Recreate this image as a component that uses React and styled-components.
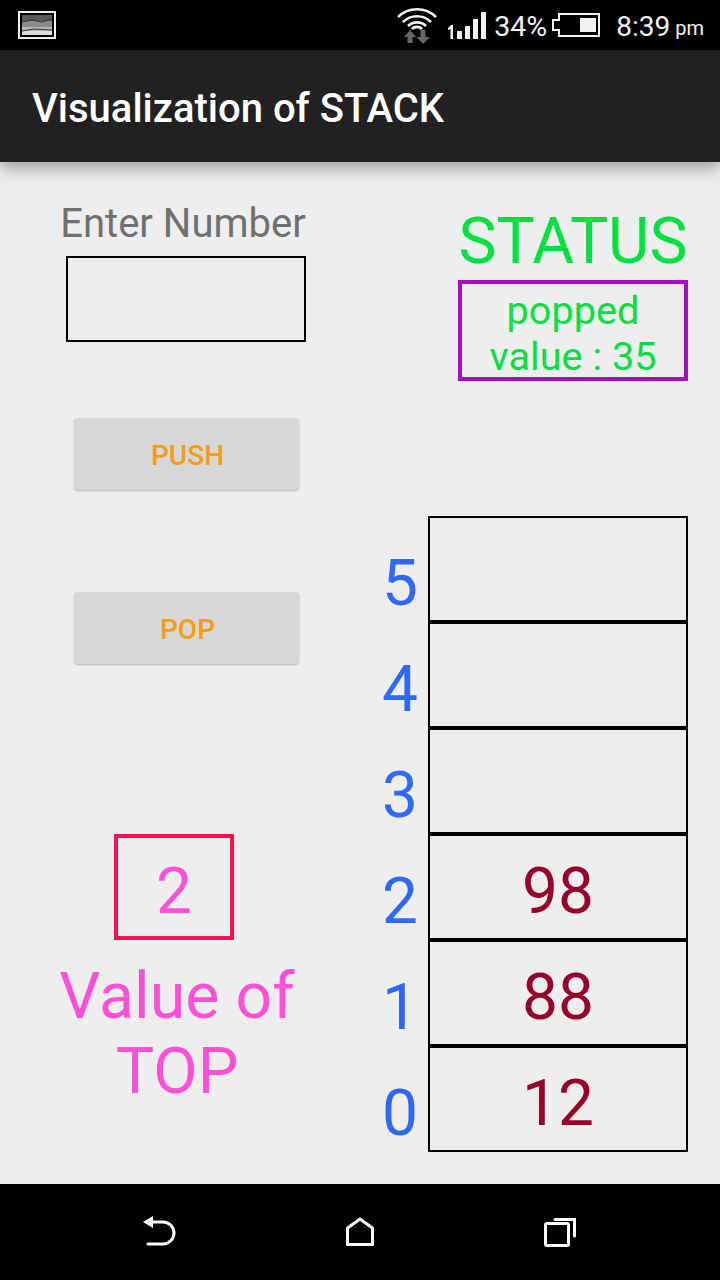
import React from "react";
import styled, { createGlobalStyle } from "styled-components";

const GlobalStyle = createGlobalStyle`
  html, body {
    margin: 0;
    padding: 0;
    background: #eeeeee;
  }
  * {
    box-sizing: border-box;
  }
`;

const Screen = styled.div`
  width: 720px;
  height: 1280px;
  display: flex;
  flex-direction: column;
  overflow: hidden;
  background: #eeeeee;
  font-family: Roboto, "Liberation Sans", sans-serif;
`;

const StatusBar = styled.div`
  height: 50px;
  flex: none;
  background: #000;
  color: #f2f2f2;
  display: flex;
  align-items: center;
  padding: 0 16px 0 18px;
`;

const StatusRight = styled.div`
  margin-left: auto;
  display: flex;
  align-items: center;
`;

const IconSlot = styled.div`
  display: flex;
  margin-left: ${(p) => p.$left || 0}px;
`;

const StatusText = styled.span`
  font-size: ${(p) => p.$size || 28}px;
  line-height: 46px;
  padding-top: 4px;
  margin-left: ${(p) => p.$left || 0}px;
`;

const Small = styled.span`
  font-size: 20px;
  line-height: 44px;
  padding-top: 6px;
  margin-left: 5px;
`;

const AppBar = styled.div`
  height: 112px;
  flex: none;
  background: #212121;
  color: #fff;
  display: flex;
  align-items: center;
  padding: 4px 0 0 32px;
  font-size: 40px;
  font-weight: 500;
  box-shadow: 0 6px 16px rgba(0, 0, 0, 0.35);
  position: relative;
  z-index: 1;
`;

const Content = styled.div`
  flex: 1;
  display: flex;
  padding-right: 32px;
`;

const LeftColumn = styled.div`
  width: 368px;
  flex: none;
  display: flex;
  flex-direction: column;
  align-items: center;
  padding-top: 39px;
`;

const EnterLabel = styled.div`
  width: 368px;
  padding-right: 2px;
  text-align: center;
  font-size: 40px;
  line-height: 45px;
  color: #707070;
`;

const NumberInput = styled.div`
  width: 240px;
  height: 86px;
  margin-top: 10px;
  margin-left: 4px;
  border: 2px solid #000;
`;

const ActionButton = styled.div`
  width: 225px;
  height: 72px;
  margin-top: ${(p) => p.$top}px;
  margin-left: 4px;
  padding: 2px 0 0 3px;
  flex: none;
  background: #d6d7d7;
  border-radius: 4px;
  box-shadow: 0 1px 2px rgba(0, 0, 0, 0.25);
  color: #f79c12;
  font-size: 28px;
  font-weight: 500;
  display: flex;
  align-items: center;
  justify-content: center;
`;

const TopBox = styled.div`
  width: 120px;
  height: 106px;
  margin-top: 170px;
  margin-left: -20px;
  padding-top: 8px;
  border: 4px solid #fa0f50;
  color: #ff50d8;
  font-size: 64px;
  display: flex;
  align-items: center;
  justify-content: center;
`;

const TopLabel = styled.div`
  width: 260px;
  margin-top: 19px;
  margin-left: -14px;
  text-align: center;
  color: #ff50d8;
  font-size: 64.5px;
  line-height: 75px;
`;

const RightColumn = styled.div`
  flex: 1;
  display: flex;
  flex-direction: column;
  align-items: flex-end;
  padding-top: 42px;
`;

const StatusTitle = styled.div`
  width: 230px;
  text-align: center;
  color: #00e040;
  font-size: 64px;
  line-height: 76px;
`;

const StatusBox = styled.div`
  width: 230px;
  height: 101px;
  border: 4px solid #a50cc4;
  color: #00e040;
  font-size: 39.7px;
  line-height: 46px;
  text-align: center;
  padding-top: 4px;
`;

const Stack = styled.div`
  width: 320px;
  margin-top: 135px;
  display: flex;
  flex-direction: column;
`;

const StackRow = styled.div`
  display: flex;
  height: 106px;
`;

const Index = styled.div`
  width: 60px;
  padding-right: 10px;
  padding-top: 30px;
  text-align: right;
  color: #2f68fb;
  font-size: 64px;
  line-height: 76px;
`;

const Cell = styled.div`
  flex: 1;
  border: 2px solid #000;
  padding-top: 8px;
  color: #96002c;
  font-size: 64px;
  display: flex;
  align-items: center;
  justify-content: center;
`;

const NavBar = styled.div`
  height: 96px;
  flex: none;
  background: #000;
  display: flex;
  align-items: flex-start;
  padding: 28px 0 0 140px;
`;

const NavIcon = styled.svg`
  width: 40px;
  height: 36px;
  margin-right: ${(p) => p.$gap || 0}px;
  fill: none;
  stroke: #fff;
  stroke-width: 3;
`;

const rows = [
  [5, ""],
  [4, ""],
  [3, ""],
  [2, "98"],
  [1, "88"],
  [0, "12"],
];

const PictureIcon = () => (
  <svg width="38" height="28" viewBox="0 0 38 28">
    <rect x="1" y="1" width="36" height="26" fill="#000" stroke="#f2f2f2" strokeWidth="2" />
    <rect x="4" y="4" width="30" height="6" fill="#5a5a5a" />
    <rect x="4" y="10" width="30" height="6" fill="#8a8a8a" />
    <rect x="4" y="16" width="30" height="4" fill="#b8b8b8" />
    <rect x="4" y="20" width="30" height="4" fill="#dcdcdc" />
    <path d="M4 11 L14 9 L24 11 L34 8 M4 20 L16 18 L34 19" stroke="#333" strokeWidth="1" fill="none" />
  </svg>
);

const WifiIcon = () => (
  <svg width="44" height="46" viewBox="0 0 44 46">
    <g fill="none" stroke="#f2f2f2" strokeWidth="2.6">
      <path d="M3 15 A27 27 0 0 1 41 15" />
      <path d="M8 20 A20 20 0 0 1 36 20" />
      <path d="M13 24 A13 13 0 0 1 31 24" />
      <path d="M17 27 A7 7 0 0 1 27 27" />
    </g>
    <path d="M15 28 L21 35 H17.5 V41 H12.5 V35 H9 Z" fill="#666" />
    <path d="M25.5 28 H30.5 V35 H35 L28 42 L21.5 35 H25.5 Z" fill="#666" />
  </svg>
);

const SignalIcon = () => (
  <svg width="40" height="28" viewBox="0 0 40 28">
    <path d="M2 17 L5 14 H7 V28 H4.5 V18 L2 19 Z" fill="#f2f2f2" />
    <rect x="11" y="20" width="5" height="8" fill="#f2f2f2" />
    <rect x="19" y="15" width="5" height="13" fill="#f2f2f2" />
    <rect x="27" y="8" width="5" height="20" fill="#f2f2f2" />
    <rect x="35" y="1" width="5" height="27" fill="#f2f2f2" />
  </svg>
);

const BatteryIcon = () => (
  <svg width="48" height="24" viewBox="0 0 48 24">
    <path d="M7 1 H47 V23 H7 V17 H1 V7 H7 Z" fill="none" stroke="#f2f2f2" strokeWidth="2" />
    <rect x="28" y="5" width="16" height="14" fill="#f2f2f2" />
  </svg>
);

const App = () => (
  <>
    <GlobalStyle />
    <Screen>
      <StatusBar>
        <PictureIcon />
        <StatusRight>
          <IconSlot>
            <WifiIcon />
          </IconSlot>
          <IconSlot $left={7}>
            <SignalIcon />
          </IconSlot>
          <StatusText $left={8} $size={28.5}>
            34%
          </StatusText>
          <IconSlot $left={5}>
            <BatteryIcon />
          </IconSlot>
          <StatusText $left={16}>8:39</StatusText>
          <Small>pm</Small>
        </StatusRight>
      </StatusBar>
      <AppBar>Visualization of STACK</AppBar>
      <Content>
        <LeftColumn>
          <EnterLabel>Enter Number</EnterLabel>
          <NumberInput />
          <ActionButton $top={76}>PUSH</ActionButton>
          <ActionButton $top={102}>POP</ActionButton>
          <TopBox>2</TopBox>
          <TopLabel>Value of TOP</TopLabel>
        </LeftColumn>
        <RightColumn>
          <StatusTitle>STATUS</StatusTitle>
          <StatusBox>
            popped
            <br />
            value : 35
          </StatusBox>
          <Stack>
            {rows.map(([index, value]) => (
              <StackRow key={index}>
                <Index>{index}</Index>
                <Cell>{value}</Cell>
              </StackRow>
            ))}
          </Stack>
        </RightColumn>
      </Content>
      <NavBar>
        <NavIcon viewBox="0 0 40 36" $gap={160}>
          <path d="M12 10 H23 A11 11 0 0 1 23 32 H8" strokeLinecap="round" />
          <path d="M3 10 L13 4 V16 Z" fill="#fff" stroke="none" />
        </NavIcon>
        <NavIcon viewBox="0 0 40 36" $gap={160}>
          <path d="M7.5 32.5 V16 L20 7 L32.5 16 V32.5 Z" strokeLinejoin="round" />
        </NavIcon>
        <NavIcon viewBox="0 0 40 36">
          <rect x="5.5" y="11.5" width="23" height="22" rx="1.5" />
          <path d="M15 7.5 H34.5 V24" strokeLinecap="round" />
        </NavIcon>
      </NavBar>
    </Screen>
  </>
);

export default App;
